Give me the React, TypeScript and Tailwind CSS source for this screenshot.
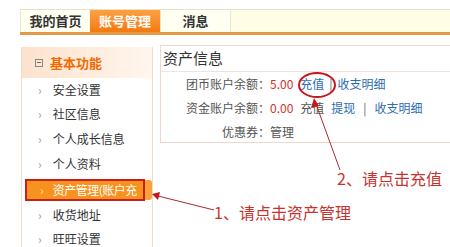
import React from "react";

const tabs = [
  { label: "我的首页", active: false },
  { label: "账号管理", active: true },
  { label: "消息", active: false },
];

const menu = [
  { label: "安全设置", h: "h-[24px]" },
  { label: "社区信息", h: "h-[24px]" },
  { label: "个人成长信息", h: "h-[25px]" },
  { label: "个人资料", h: "h-[26px]" },
  { label: "资产管理(账户充", h: "h-[26px]", active: true },
  { label: "收货地址", h: "h-[24px]" },
  { label: "旺旺设置", h: "h-[24px]" },
];

const font = { fontFamily: '"Noto Sans CJK SC", "Noto Sans", sans-serif' };

export default function App() {
  return (
    <div
      className="relative h-[247px] w-[450px] overflow-hidden bg-white text-[#333]"
      style={font}
    >
      {/* top tabs */}
      <div className="ml-[20px] mt-[9px] flex h-[26px] border-t border-b-[3px] border-t-[#e6e1c9] border-b-[#e49a45] bg-[#fffde6]">
        {tabs.map((t) => (
          <div
            key={t.label}
            className={`flex w-[70px] items-center justify-center text-[13px] font-bold ${
              t.active
                ? "bg-gradient-to-b from-[#ffa040] to-[#f37a0c] text-white"
                : "border-l border-[#ece6cc] bg-[#fffff2] text-[#333]"
            }`}
          >
            {t.label}
          </div>
        ))}
        <div className="flex-1 border-l border-[#ece6cc]" />
      </div>

      <div className="flex items-start">
        {/* sidebar */}
        <div className="ml-[21px] mt-[12px] w-[136px] border-x border-[#f5d9ca]">
          <div className="flex h-[31px] items-center bg-gradient-to-r from-[#fde2cd] to-[#fff6ee] pl-[13px]">
            <div className="flex h-[8px] w-[8px] items-center justify-center border border-[#888]">
              <div className="h-px w-[4px] bg-[#666]" />
            </div>
            <span className="ml-[7px] text-[13px] font-bold text-[#f26a00]">
              基本功能
            </span>
          </div>
          {menu.map((m) =>
            m.active ? (
              <div key={m.label} className={`flex items-center ${m.h}`}>
                <div className="ml-[3px] flex h-[22px] w-[120px] items-center border-2 border-[#c81f1c] bg-[#f7921e] pl-[13px] text-[12px] text-white">
                  <span className="mr-[9px] text-[12px] text-[#fde6c8]">›</span>
                  <span className="whitespace-nowrap tracking-[-0.5px]">{m.label}</span>
                </div>
                <div className="h-[20px] w-[7px] rounded-r-[3px] bg-[#f9a23a]" />
              </div>
            ) : (
              <div
                key={m.label}
                className={`flex items-center pl-[16px] text-[12px] ${m.h}`}
              >
                <span className="mr-[11px] text-[12px] text-[#999]">›</span>
                <span>{m.label}</span>
              </div>
            )
          )}
        </div>

        {/* asset panel */}
        <div className="ml-[7px] mt-[10px] h-[98px] w-[300px] shrink-0 border border-[#efd9cd]">
          <div className="flex h-[26px] items-center border-b border-[#efe3dc] pl-[2px] text-[15px] text-[#333]">
            资产信息
          </div>
          <div className="text-[12px]">
            <div className="flex h-[24px] items-center">
              <span className="w-[109px] text-right text-[#555]">团币账户余额：</span>
              <span className="text-[#d0302a]">5.00</span>
              <span className="ml-[7px] text-[#2b6cb3]">充值</span>
              <span className="mx-[5px] text-[#666]">|</span>
              <span className="text-[#2b6cb3]">收支明细</span>
            </div>
            <div className="flex h-[24px] items-center">
              <span className="w-[109px] text-right text-[#555]">资金账户余额：</span>
              <span className="text-[#d0302a]">0.00</span>
              <span className="ml-[7px] text-[#555]">充值</span>
              <span className="ml-[7px] text-[#2b6cb3]">提现</span>
              <span className="mx-[8px] text-[#666]">|</span>
              <span className="text-[#2b6cb3]">收支明细</span>
            </div>
            <div className="flex h-[23px] items-center">
              <span className="w-[109px] text-right text-[#555]">优惠券：</span>
              <span className="text-[#555]">管理</span>
            </div>
          </div>
        </div>
      </div>

      {/* annotations */}
      <svg
        className="pointer-events-none absolute left-0 top-0"
        width="450"
        height="247"
        viewBox="0 0 450 247"
      >
        <ellipse cx="317" cy="85" rx="18" ry="12" fill="none" stroke="#c8161d" strokeWidth="2" />
        <line x1="340" y1="170" x2="316" y2="104" stroke="#a82a2a" strokeWidth="1" />
        <polygon points="314,98 311,108 319,106" fill="#c8161d" />
        <line x1="214" y1="210" x2="158" y2="196" stroke="#a82a2a" strokeWidth="1" />
        <polygon points="152,194 160,192 158,200" fill="#c8161d" />
      </svg>
      <div className="absolute left-[337px] top-[168px] text-[16px] leading-[20px] text-[#c8322d]">
        2、请点击充值
      </div>
      <div className="absolute left-[214px] top-[202px] text-[16px] leading-[20px] text-[#c8322d]">
        1、请点击资产管理
      </div>
    </div>
  );
}
